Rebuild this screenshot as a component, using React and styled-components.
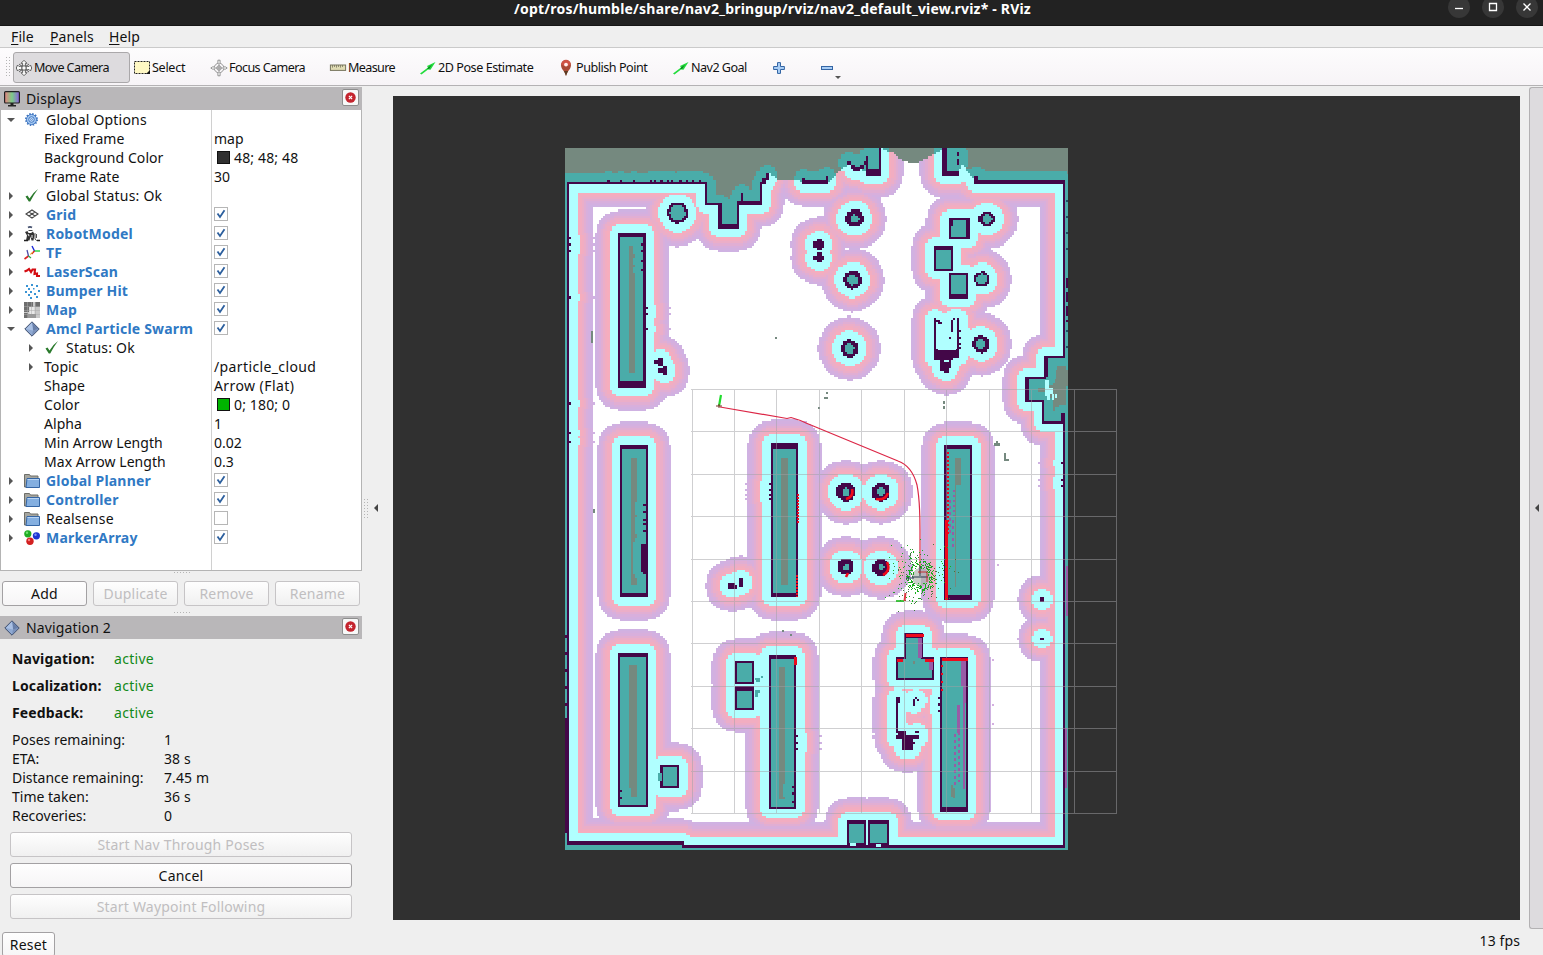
import React from 'react';
import styled, { createGlobalStyle } from 'styled-components';

const Global = createGlobalStyle`
  html, body { margin: 0; padding: 0; }
  body { width: 1543px; height: 955px; overflow: hidden; background: #efefef; }
  * { box-sizing: border-box; }
  body, button { font-family: "Noto Sans", "Open Sans", sans-serif; font-size: 14px; color: #111; }
`;

/* ---------- costmap ---------- */

const CELL = 2.12;
const COLS = 237;
const ROWS = 331;
const OX = 565;
const OY = 148;

const SHELVES = [
  [618, 233, 28, 155, 4, 6], [620, 445, 28, 153, 4, 4], [619, 653, 28, 155, 4, 3], [770, 443, 29, 155, 5, 5],
  [945, 445, 27, 155, 4, 4], [768, 655, 28, 155, 4, 3], [940, 657, 28, 155, 4, 4],
];
const BOXES = [
  [949, 218, 21, 22], [934, 246, 19, 25], [948, 273, 20, 25], [735, 661, 19, 23], [735, 687, 19, 23],
  [661, 765, 19, 24], [905, 634, 19, 26], [896, 656, 38, 24], [847, 821, 19, 25], [869, 821, 20, 25],
];
const DISCS = [
  [677.5, 213, 10.4, 7.6], [854.5, 218.5, 9, 4.2], [852.5, 280, 9, 5], [849.5, 348.5, 8.8, 5],
  [987, 219, 8, 5.2], [982, 279, 7.4, 5], [981, 344, 8.6, 4.8],
  [846, 492, 9.4, 4], [881, 492, 9.4, 4], [846, 567, 8, 3.2], [881, 567.5, 8.5, 3.2],
];
const SOLIDS = [
  [567, 182, 2, 662], [567, 182, 141, 2.5], [705, 182, 3, 24], [705, 203, 15, 3], [718, 203, 3, 25], [718, 225, 21, 3],
  [736, 203, 3, 25], [736, 202, 26, 3], [760, 182, 3, 23], [763, 177, 3, 6], [766, 173, 3, 7], [741, 193, 2, 10],
  [803, 180, 25, 3.5], [803, 177, 2, 4], [826, 176, 2, 5],
  [848, 161, 3, 5], [851, 164, 4, 5], [854, 167, 6, 5], [859, 164, 5, 6], [863, 160, 4, 5], [866, 157, 3, 17],
  [866, 170, 15, 5], [878, 149, 3, 25],
  [943, 149, 4, 25], [943, 171, 17, 4], [957, 152, 3, 4], [957, 159, 3, 6],
  [975, 180, 91, 3], [975, 176, 3, 5], [1064, 180, 1.5, 176], [1064, 420, 1.5, 428],
  [1045, 356, 20, 2.5], [1045, 356, 2.5, 20], [1026, 377, 21, 2.5], [1026, 377, 3, 25], [1026, 400, 18, 2.5],
  [1042, 400, 3, 24], [1042, 421, 19, 2.5], [1062, 413, 3, 11],
  [934, 318, 2.4, 36], [936, 319, 4, 3], [939, 322, 3, 3], [953, 317, 3, 3], [950, 320, 2.4, 12], [957, 318, 2.4, 34],
  [933, 350, 27, 7], [934, 356, 18, 4], [941, 358, 3, 12], [945, 363, 3, 9], [949, 358, 2.5, 11], [949, 337, 1.5, 1.5],
  [814, 242, 9, 6], [817, 240, 4, 10], [814, 256, 9, 4], [817, 252, 4, 11],
  [655, 360, 7, 4], [658, 358, 4, 8], [659, 368, 7, 4], [662, 366, 4, 9],
  [728, 583, 6, 6], [730, 585, 6, 5], [739, 579, 5, 7], [735, 585, 2, 2],
  [1040, 598, 4.3, 4], [1040, 637.5, 4.3, 2.3],
  [896, 697, 2.2, 36], [898, 697, 2, 6], [912, 700, 2, 5], [915, 697, 2, 3], [917, 699, 2, 3],
  [895, 735, 24, 4], [898, 731, 9, 4], [914, 731, 5, 3], [902, 739, 10, 11], [912, 741, 3, 3],
  [567, 842, 116, 2.5], [682, 845, 383, 2.5],
];
const TOP_UNKNOWN = [
  [565, 147], [1068, 147], [1068, 182], [976, 182], [974, 178], [966, 170], [962, 164], [959, 173], [945, 173], [944, 149],
  [930, 156], [922, 161], [912, 163], [900, 159], [893, 153], [882, 149], [879, 149], [879, 173], [868, 173], [850, 164],
  [841, 169], [836, 176], [828, 182], [803, 182], [797, 180], [778, 179], [768, 173], [765, 178], [761, 184], [761, 203],
  [738, 204], [737, 226], [719, 226], [719, 204], [706, 204], [706, 183], [565, 183],
];
const NICHE = [[1068, 356], [1046, 356], [1046, 378], [1028, 378], [1028, 400], [1043, 400], [1043, 422], [1068, 422]];

function inPoly(x, y, poly) {
  let inside = false;
  for (let i = 0, j = poly.length - 1; i < poly.length; j = i++) {
    const [xi, yi] = poly[i];
    const [xj, yj] = poly[j];
    if (yi > y !== yj > y && x < ((xj - xi) * (y - yi)) / (yj - yi) + xi) inside = !inside;
  }
  return inside;
}

const PALETTE = {
  wall: '#430748', cyan: '#b0ffff', teal: '#4aaca9', gray: '#75897f',
  p0: '#f6adbd', p1: '#f2adc1', p2: '#ebaec8', p3: '#e1aed3', p4: '#d8afdc', p5: '#d3b0e0', p6: '#cfb2e2',
};

function buildCostmap() {
  const n = COLS * ROWS;
  const wall = new Uint8Array(n);
  const unknown = new Uint8Array(n);
  const dist = new Float32Array(n).fill(99);
  const fillRect = (arr, x, y, w, h, v = 1) => {
    const c0 = Math.max(0, Math.round((x - OX) / CELL));
    const r0 = Math.max(0, Math.round((y - OY) / CELL));
    const c1 = Math.min(COLS, Math.max(c0 + 1, Math.round((x + w - OX) / CELL)));
    const r1 = Math.min(ROWS, Math.max(r0 + 1, Math.round((y + h - OY) / CELL)));
    for (let r = r0; r < r1; r++) for (let c = c0; c < c1; c++) arr[r * COLS + c] = v;
  };
  for (let r = 0; r < ROWS; r++) {
    for (let c = 0; c < COLS; c++) {
      const x = OX + (c + 0.5) * CELL;
      const y = OY + (r + 0.5) * CELL;
      const i = r * COLS + c;
      if (x < 567 || x > 1066 || y > 848 || (y > 843.5 && x < 683)) unknown[i] = 1;
      if (y < 230 && inPoly(x, y, TOP_UNKNOWN)) unknown[i] = 1;
      if (x > 1020 && inPoly(x, y, NICHE)) unknown[i] = 1;
      DISCS.forEach(([cx, cy, ro, ri]) => {
        const d = Math.hypot(x - cx, y - cy);
        if (d < ri) unknown[i] = 1;
        else if (d < ro) wall[i] = 1;
      });
    }
  }
  SHELVES.forEach(([x, y, w, h, t, b]) => {
    fillRect(wall, x, y, w, h);
    fillRect(wall, x + 2.1, y + t, w - 4.5, h - t - b, 0);
    fillRect(unknown, x + 2.1, y + t, w - 4.5, h - t - b);
  });
  BOXES.forEach(([x, y, w, h]) => {
    fillRect(wall, x, y, w, h);
    fillRect(wall, x + 2.2, y + 3, w - 4.4, h - 5, 0);
    fillRect(unknown, x + 2.2, y + 3, w - 4.4, h - 5);
  });
  fillRect(wall, 907, 650, 14, 9, 0);
  fillRect(unknown, 907, 650, 14, 9);
  SOLIDS.forEach((s) => fillRect(wall, ...s));
  const extra = [
    [608, 180], [621, 180], [633, 180], [649, 180], [654, 180], [660, 180], [666, 180], [672, 180], [679, 180], [686, 180], [693, 180], [698, 180],
    [569, 236], [569, 243], [569, 249], [569, 297], [569, 403], [569, 433], [569, 441],
    [646, 308], [646, 313], [646, 329], [643, 237], [641, 243], [641, 250], [641, 260], [641, 268],
    [643, 504], [643, 511], [643, 518], [643, 524], [643, 530], [643, 548], [643, 552], [643, 560], [643, 568], [643, 573],
    [768, 484], [768, 489], [768, 494], [768, 498], [618, 703], [618, 712], [618, 718], [618, 724], [620, 790], [620, 796],
    [796, 736], [796, 742], [796, 748], [792, 786], [792, 793], [792, 800], [939, 697], [939, 704], [939, 710],
    [960, 330], [960, 336], [960, 342], [960, 348], [1062, 462], [1062, 478], [1062, 486],
  ];
  extra.forEach(([x, y]) => fillRect(wall, x, y, 2, 2));
  /* thick right-hand edges on some scans */
  [[643, 237, 2, 28], [641, 545, 4, 26], [948, 220, 4, 6], [966, 220, 3, 16], [948, 294, 20, 3], [796, 450, 2, 140]].forEach((s) => fillRect(wall, ...s));
  const R = 11;
  for (let r = 0; r < ROWS; r++) {
    for (let c = 0; c < COLS; c++) {
      if (!wall[r * COLS + c]) continue;
      for (let dr = -R; dr <= R; dr++) {
        const rr = r + dr;
        if (rr < 0 || rr >= ROWS) continue;
        for (let dc = -R; dc <= R; dc++) {
          const cc = c + dc;
          if (cc < 0 || cc >= COLS) continue;
          const d = Math.hypot(dr, dc);
          const i = rr * COLS + cc;
          if (d < dist[i]) dist[i] = d;
        }
      }
    }
  }
  const paths = {};
  const kind = (i) => {
    if (wall[i]) return 'wall';
    const d = dist[i];
    if (unknown[i]) return d <= 4.3 ? 'teal' : 'gray';
    if (d <= 4.3) return 'cyan';
    if (d > 11) return null;
    return 'p' + Math.min(6, Math.floor(d - 4.3));
  };
  for (let r = 0; r < ROWS; r++) {
    let start = 0;
    let cur = kind(r * COLS);
    for (let c = 1; c <= COLS; c++) {
      const k = c < COLS ? kind(r * COLS + c) : undefined;
      if (k === cur) continue;
      if (cur) {
        const x0 = Math.round(OX + start * CELL);
        const x1 = Math.round(OX + c * CELL);
        const y0 = Math.round(OY + r * CELL);
        const y1 = Math.round(OY + (r + 1) * CELL);
        paths[cur] = (paths[cur] || '') + `M${x0} ${y0}H${x1}V${y1}H${x0}Z`;
      }
      start = c;
      cur = k;
    }
  }
  return paths;
}

const COSTMAP = buildCostmap();

function makeRandom(seed) {
  let s = seed;
  return () => {
    s = (s * 16807) % 2147483647;
    return s / 2147483647;
  };
}

function buildParticles() {
  const rnd = makeRandom(4217);
  const out = ['', ''];
  for (let i = 0; i < 400; i++) {
    const ring = i < 210;
    const a = rnd() * Math.PI * 2;
    const rad = ring ? 11.5 + (rnd() + rnd() - 1) * 5 : 6 + Math.sqrt(-2 * Math.log(rnd() + 0.001)) * 12;
    const x = Math.round(920 + Math.cos(a) * rad);
    const y = Math.round(576 + Math.sin(a) * rad * 1.05);
    if (y > 520 && y < 612) out[ring ? 0 : i % 2] += `M${x} ${y}h1v1h-1z`;
  }
  return out;
}
const PARTICLES = buildParticles();

const GRID_X = Array.from({ length: 11 }, (_, i) => Math.round(691.5 + i * 42.45) + 0.5);
const GRID_Y = Array.from({ length: 11 }, (_, i) => Math.round(389 + i * 42.4) + 0.5);

const Canvas = styled.svg`
  display: block;
  width: 1127px;
  height: 824px;
  background: #303030;
`;

function MapView() {
  return (
    <Canvas viewBox="393 96 1127 824">
      <g shapeRendering="crispEdges">
        <rect x="566" y="149" width="500" height="700" fill="#fff" />
        {Object.entries(COSTMAP).map(([k, d]) => <path key={k} d={d} fill={PALETTE[k]} />)}
        <path d="M1066 174h2v676h-2z" fill="#4aaca9" />
        <path d="M1067 148h1v26h-1z" fill="#75897f" />
        <path d="M938 325h11v25h-11zM949 340h7v10h-7z" fill="#b0ffff" />
        {/* scanned shelves without a hollow core */}
        <path d="M956 485h7v107h-7zM949 668h8v136h-8zM904 664h22v8h-22z" fill="#4aaca9" />
        <path d="M961 661h5v42h-3v-17h-2zM963 703h2v86h-2zM957 705h3v28h-3zM918 638h4v20h-4zM929 660h4v10h-4z" fill="#985ca6" />
        <path d="M959 732v50M955 734v52M950 500v35M953 520v30" stroke="#985ca6" strokeWidth="2" strokeDasharray="3 3" />
        <path d="M954 490v26" stroke="#985ca6" strokeWidth="2" strokeDasharray="2 3" />
        <path d="M952 785v12M954 788v10" stroke="#75897f" strokeWidth="2" />
        <path d="M1067 566v50M1066 728v60" stroke="#985ca6" strokeWidth="2" />
        <path d="M1067 200v60M1067 330v26" stroke="#204e66" strokeWidth="2" strokeDasharray="2 14" />
        <path d="M1067 278v44" stroke="#430748" strokeWidth="2" strokeDasharray="10 4" />
        <path d="M566 718v115" stroke="#430748" strokeWidth="2" />
        <path d="M566 635v80" stroke="#430748" strokeWidth="2" strokeDasharray="3 14" />
        <path d="M755 678h6v-2h2v2h-3v4h-4zM755 690h5v3h-2v4h-3zM658 773h4v8h-4z" fill="#4aaca9" />
        <path d="M1045 380h4v8h4v6h-4v2h-4zM1047 394h3v6h-3zM1052 394h2v6h-2zM1055 394h2v4h-2zM850 843h6v3h-6zM876 844h5v3h-5z" fill="#b0ffff" />
        <path d="M1056 370h12v16h-9v-5h-3z" fill="#75897f" />
        <path d="M591 331h2v12h-2zM775 337h2v2h-2zM826 392h2v2h-2zM824 397h4v2h-4zM818 407h2v2h-2zM943 401h2v3h-2zM943 406h2v3h-2zM593 509h2v4h-2zM994 443h6v3h-6zM996 441h2v2h-2zM1004 453h2v6h3v2h-5zM782 630h2v2h-2zM790 634h2v2h-2z" fill="#75897f" />
        {/* doubtful cells at the inflation edge */}
        <path d="M992 659h2v2h-2zM992 704h2v2h-2zM992 723h2v2h-2zM997 564h2v2h-2z" fill="#d3b0e0" />
      </g>
      <path
        d={GRID_X.map((x) => `M${x} 389V814`).join('') + GRID_Y.map((y) => `M691 ${y}H1116`).join('')}
        stroke="#a0a0a4" strokeOpacity="0.5" strokeWidth="1" fill="none" shapeRendering="crispEdges"
      />
      {/* laser returns */}
      <g fill="none" stroke="#ee0a1c" strokeWidth="2" shapeRendering="crispEdges">
        <path d="M798 494v29M797 575v22" strokeDasharray="2 1" />
        <path d="M946.500 520v80" strokeWidth="3" />
        <path d="M948 452v84" strokeDasharray="2 2" />
        <path d="M906 635.500h18M897 660h6M925 660h9M942 659h26" strokeWidth="3" />
        <path d="M942 665v30" strokeDasharray="2 6" />
        <path d="M795 657v8" strokeWidth="3" />
      </g>
      <g fill="none" stroke="#f00a1a" strokeWidth="2.600">
        <path d="M852 489q2 8-6 10M888 493q-3 8-12 6M887 562q4 9-4 13M848 573l-2 4" />
      </g>
      {/* planned path */}
      <path d="M720 407L787 418.500L791 417.500Q800 420 806 423L898 461Q912 466 917 485Q920 500 920 530V574" fill="none" stroke="#dc2646" strokeWidth="1.200" />
      <path d="M719 406l2-11" stroke="#1fdc2c" strokeWidth="2.200" />
      <path d="M716 406h6M719 404v4" stroke="#7a3328" strokeWidth="1" />
      <g shapeRendering="crispEdges">
        <circle cx="921" cy="577" r="9" fill="#a3ada0" fillOpacity="0.6" />
        <path d={PARTICLES[0]} fill="#18b01c" />
        <path d={PARTICLES[1]} fill="#3f7a3c" />
      </g>
      <path d="M920 566v10M912 577h16M906 578h8" stroke="#263b50" strokeWidth="1" />
      <path d="M918 572h9v10" stroke="#c03030" strokeWidth="1" fill="none" />
      <path d="M896 601h8" stroke="#18b818" strokeWidth="1.600" />
      <path d="M905.500 593l-1 8" stroke="#e03a42" strokeWidth="2" />
    </Canvas>
  );
}

/* ---------- icons ---------- */

const Svg = styled.svg`
  display: block;
  flex: none;
  width: ${(p) => p.$s || 16}px;
  height: ${(p) => p.$s || 16}px;
  overflow: visible;
`;

const TfArrow = () => (
  <Svg viewBox="0 0 16 16">
    <path d="M0 13.500L1.500 14.500L8 9.500L10.500 9.800L15.500 2L7 6L8 7.500Z" fill="#22dc3c" />
    <path d="M7 8.500l5-4-3 4.500z" fill="#0b7d20" />
  </Svg>
);

const DiamondIcon = () => (
  <Svg viewBox="0 0 16 16">
    <path d="M8 .8L15.200 8L8 15.200L.8 8Z" fill="#8fa9d2" stroke="#3c4c6b" strokeWidth="1" />
    <path d="M8 1.500L14.500 8L9 9.500Z" fill="#687fa9" />
    <path d="M8 1.500L9 9.500L2 8Z" fill="#a9c0e4" />
    <path d="M9 9.500L8 14.500L14.500 8Z" fill="#7990ba" />
  </Svg>
);

const ICONS = {
  move: (
    <Svg viewBox="0 0 16 16">
      <g fill="#fafafa" stroke="#555" strokeWidth="0.900">
        <path d="M8 .3l3 3H9.400v3H6.600v-3H5zM8 15.700l-3-3h1.600v-3h2.800v3H11z" />
        <path d="M.3 8l1.200-3 1.500 1.500 3-.5v4l-3-.5-1.500 1.500zM15.700 8l-1.200-3L13 6.500l-3-.5v4l3-.5 1.500 1.500z" />
        <path d="M3 4l10 8M13 4L3 12" />
        <circle cx="8" cy="8" r="2.200" />
      </g>
    </Svg>
  ),
  select: (
    <Svg viewBox="0 0 16 16">
      <rect x=".5" y="1.500" width="15" height="12" fill="#fff8c4" stroke="#222" strokeWidth="1" strokeDasharray="2 1" />
      <path d="M12 14l4-4v4z" fill="#111" />
    </Svg>
  ),
  focus: (
    <Svg viewBox="0 0 16 16">
      <g fill="none" stroke="#8a8a8a" strokeWidth=".9">
        <circle cx="8" cy="8" r="4.800" />
        <circle cx="8" cy="8" r="2.200" />
        <path d="M8 3.500v9M3.500 8h9" />
        <path d="M6.900 3.300V.2h2.200v3.100M6.900 12.700v3.100h2.200v-3.100M3.300 6.900H1.500L-.2 8l1.700 1.100h1.800M12.700 6.900h1.800L16.200 8l-1.700 1.100h-1.800" fill="#fafafa" />
      </g>
    </Svg>
  ),
  measure: (
    <Svg viewBox="0 0 16 16">
      <rect x=".4" y="5" width="15.200" height="5.400" fill="#e0dcb4" stroke="#77755e" strokeWidth="1" />
      <path d="M2.500 5v2.600M4.500 5v2M6.500 5v2.600M8.500 5v2M10.500 5v2.600M12.500 5v2" stroke="#77755e" strokeWidth=".8" />
    </Svg>
  ),
  arrow: <TfArrow />,
  pin: (
    <Svg viewBox="0 0 16 16">
      <path d="M8 16C7 11 3 9.500 3 5A5 5 0 0 1 13 5C13 9.500 9 11 8 16Z" fill="#a94a35" />
      <path d="M3.300 4.500A4.700 4.700 0 0 1 12.700 4.500Q8 8 3.300 4.500Z" fill="#cf5344" />
      <path d="M6 11h4l-2 5z" fill="#5b3a22" />
      <circle cx="8" cy="4.600" r="1.900" fill="#fff0ec" />
    </Svg>
  ),
  plus: (
    <Svg $s={12} viewBox="0 0 12 12">
      <path d="M4.500 .6h3v3.900h3.900v3H7.500v3.900h-3V7.500H.6v-3h3.900z" fill="#a8cdf5" stroke="#3465a4" />
    </Svg>
  ),
  minus: (
    <Svg $s={12} viewBox="0 0 12 12">
      <rect x=".5" y="4.500" width="11" height="3" fill="#a8cdf5" stroke="#3465a4" />
    </Svg>
  ),
  gear: (
    <Svg viewBox="0 0 16 16">
      <circle cx="7.500" cy="7.500" r="5" fill="#a9cdf6" stroke="#4076c0" strokeWidth="1" />
      <circle cx="7.500" cy="7.500" r="5.700" fill="none" stroke="#4076c0" strokeWidth="1.600" strokeDasharray="1.492 1.492" />
      <circle cx="7.500" cy="7.500" r="2.800" fill="#c4ddfa" stroke="#4076c0" />
      <circle cx="7.500" cy="7.500" r=".9" fill="#fff" stroke="#4076c0" strokeWidth=".8" />
    </Svg>
  ),
  check: (
    <Svg viewBox="0 0 16 16">
      <path d="M1.500 8.500L3.500 7.500L5.500 10.500Q9 4.500 14 1Q9.500 7 6.200 13.500H4.800Z" fill="#2a7a2c" />
    </Svg>
  ),
  grid: (
    <Svg viewBox="0 0 16 16">
      <path d="M8 3L14 7L8 11L2 7ZM5 5L11 9M11 5L5 9" fill="none" stroke="#444" strokeWidth="1.100" />
    </Svg>
  ),
  robot: (
    <Svg viewBox="0 0 16 16">
      <path d="M4 1.500Q6 .3 8 1.500" stroke="#44506e" strokeWidth="1.600" fill="none" />
      <path d="M4.500 4.500h4" stroke="#444" />
      <path d="M1 6l2.500-1 1 2h2.500l2-1.500 1.500 3-1 6H7.500l-1-4-1 4H2l1-5z" fill="#333" />
      <path d="M11 7v6q1 2 3 1.500M12.500 8v4M5 8v3" stroke="#555" fill="none" />
      <path d="M0 14.500h4M13 14.500h3" stroke="#222" strokeWidth="1.500" />
      <path d="M4 8l1 2M8 9v3" stroke="#eee" />
    </Svg>
  ),
  tf: (
    <Svg viewBox="0 0 16 16">
      <path d="M8 1l2.500 5" stroke="#1c28d8" strokeWidth="1.400" />
      <path d="M10.500 6H16" stroke="#1fd03a" strokeWidth="1.400" />
      <path d="M10.500 6L7.500 9M4.500 11L.5 14" stroke="#d22" strokeWidth="1.600" />
      <path d="M3 5l1.500 6" stroke="#4c4ca8" strokeWidth="1.300" />
      <path d="M4.500 11L7 13" stroke="#2a4" strokeWidth="1.200" />
      <path d="M6 9.500L9 7" stroke="#e0b020" />
    </Svg>
  ),
  laser: (
    <Svg viewBox="0 0 16 16">
      <path d="M.5 7.500L3 6.500l2-1.500 2 3 1.500-2.500h2.500L10.500 10l2.500-.5 0 2.500L16 12" fill="none" stroke="#d40b10" strokeWidth="2.100" />
    </Svg>
  ),
  bumper: (
    <Svg viewBox="0 0 16 16">
      <path d="M2 2h2v2H2zM7 1h2v2H7zM12 2h2v2h-2zM4 5h2v2H4zM9 5h1.500v1.500H9zM1 8h2v2H1zM6 8h2v2H6zM14 7h2v2h-2zM4 11h2v2H4zM10 10h2v2h-2zM12 13h2v2h-2zM6 14h2v2H6z" fill="#3a94d4" />
    </Svg>
  ),
  map: (
    <Svg viewBox="0 0 16 16">
      <rect width="16" height="16" fill="#c9c9c9" />
      <path d="M0 0h9v5H5v5H0zM0 11h4v5H0zM11 0h5v5h-5z" fill="#6e6e6e" />
      <path d="M5.500 5h5v11h-5z" fill="#e9e9e9" />
      <path d="M3.500 0v16M7.500 0v16M11.500 0v16M0 4.500h16M0 8.500h16M0 12.500h16" stroke="#aaa" strokeWidth=".5" />
      <path d="M4 12h8v4H4z" fill="#999" />
    </Svg>
  ),
  diamond: <DiamondIcon />,
  folder: (
    <Svg viewBox="0 0 16 16">
      <path d="M.5 14V1.500h5l1 1.500h7.500V14Z" fill="#a6a69f" stroke="#6e6e68" />
      <path d="M3 5.500H15.500V14.500H2Z" fill="#84afe0" stroke="#3465a4" />
      <path d="M3.500 6.500h11.500" stroke="#b8d3f2" />
    </Svg>
  ),
  markers: (
    <Svg viewBox="0 0 16 16">
      <circle cx="3.800" cy="3.800" r="3.600" fill="#1fae24" />
      <circle cx="12.400" cy="5.800" r="3.600" fill="#1c35d2" />
      <circle cx="6" cy="11.300" r="3.700" fill="#d32020" />
      <circle cx="3" cy="2.800" r="1.200" fill="#6fe070" />
      <circle cx="11.500" cy="4.800" r="1.200" fill="#7c90f5" />
      <circle cx="5" cy="10" r="1.200" fill="#f58080" />
    </Svg>
  ),
  monitor: (
    <Svg viewBox="0 0 16 16">
      <defs>
        <linearGradient id="screen">
          <stop offset="0" stopColor="#e88080" />
          <stop offset=".5" stopColor="#7ccc88" />
          <stop offset="1" stopColor="#8a5fe0" />
        </linearGradient>
      </defs>
      <rect x=".6" y=".6" width="14.800" height="11.400" rx="1" fill="url(#screen)" stroke="#222" strokeWidth="1.200" />
      <path d="M6.500 12h3v2h2.500v1.500H4V14h2.500z" fill="#222" />
    </Svg>
  ),
};

/* ---------- window chrome ---------- */

const Window = styled.div`
  width: 1543px;
  height: 955px;
  display: flex;
  flex-direction: column;
  overflow: hidden;
  background: #efefef;
`;

const TitleBar = styled.header`
  flex: none;
  height: 26px;
  background: #222;
  border-bottom: 1px solid #161616;
  display: grid;
  grid-template-columns: 1fr 540px 1fr;
  color: #fff;
`;

const Title = styled.div`
  grid-column: 2;
  padding-left: 2px;
  text-align: center;
  font-weight: 700;
  font-size: 14px;
  line-height: 17px;
  white-space: nowrap;
  letter-spacing: 0.2px;
`;

const WindowButtons = styled.div`
  display: flex;
  justify-content: flex-end;
  gap: 12px;
  padding-right: 5px;
`;

const WindowButton = styled.div`
  width: 22px;
  height: 22px;
  margin-top: -4px;
  border-radius: 50%;
  background: #373737;
  display: grid;
  place-items: center;
`;

const MenuBar = styled.nav`
  flex: none;
  height: 22px;
  border-bottom: 1px solid #cacaca;
  padding: 0 11px;
  display: flex;
  gap: 15px;
  line-height: 21px;
`;

const MenuItem = styled.span`
  &::first-letter { text-decoration: underline; text-decoration-thickness: 1px; text-underline-offset: 2px; }
  display: inline-block;
  width: ${(p) => p.$w}px;
  white-space: nowrap;
  letter-spacing: 0.1px;
`;

const ToolBar = styled.div`
  flex: none;
  height: 38px;
  display: flex;
  align-items: flex-end;
  padding: 0 0 2px 5px;
  background: linear-gradient(#fdfcfd, #f7f4f7);
  border-bottom: 1px solid #b4b2b4;
`;

const Grip = styled.div`
  flex: none;
  width: ${(p) => p.$w}px;
  height: ${(p) => p.$h}px;
  margin: ${(p) => p.$m || 0};
  background-image: radial-gradient(circle, #b5b5b5 0.7px, transparent 0.9px);
  background-size: 3px 3px;
`;

const Tool = styled.div`
  position: relative;
  flex: none;
  display: flex;
  align-items: center;
  gap: 2px;
  width: ${(p) => p.$w}px;
  height: 31px;
  padding-left: ${(p) => (p.$on ? 2 : 4)}px;
  border: 1px solid ${(p) => (p.$on ? '#aaa8aa' : 'transparent')};
  border-width: ${(p) => (p.$on ? 1 : 0)}px;
  border-radius: 3px;
  background: ${(p) => (p.$on ? '#dddbde' : 'none')};
  font-size: 12.6px;
  letter-spacing: ${(p) => p.$ls || 0}px;
  white-space: nowrap;
`;

const Caret = styled.i`
  position: absolute;
  left: 18px;
  top: 24px;
  border: 3px solid transparent;
  border-top-color: #555;
  border-bottom: 0;
`;

const Body = styled.div`
  flex: 1;
  display: flex;
  min-height: 0;
`;

const Side = styled.aside`
  width: 362px;
  flex: none;
  display: flex;
  flex-direction: column;
  padding-top: 1px;
`;

const PanelHead = styled.div`
  flex: none;
  display: flex;
  align-items: center;
  height: 23px;
  padding: 0 3px 0 4px;
  gap: 6px;
  background: #b9b7b9;
`;

const PanelTitle = styled.span`
  flex: 1;
  line-height: 22px;
  letter-spacing: 0.15px;
`;

const CloseButton = styled.div`
  width: 17px;
  height: 17px;
  margin-top: -3px;
  border: 1px solid #8d8d8d;
  border-radius: 2px;
  background: #f8f8f8;
  display: grid;
  place-items: center;
`;

const Tree = styled.div`
  flex: none;
  height: 461px;
  border: 1px solid #b4b4b4;
  border-top: 0;
  background: linear-gradient(to right, #fff 210px, #d0d0d0 210px, #d0d0d0 211px, #fff 211px);
`;

const Row = styled.div`
  display: flex;
  align-items: center;
  height: 19px;
  line-height: 19px;
`;

const NameCell = styled.div`
  width: 211px;
  flex: none;
  display: flex;
  align-items: center;
  padding-left: ${(p) => 4 + p.$level * 20}px;
  white-space: nowrap;
`;

const Expander = styled.i`
  flex: none;
  width: 12px;
  height: 8px;
  margin-right: 7px;
  display: grid;
  place-items: center;
  &::before {
    content: "";
    display: ${(p) => (p.$state ? 'block' : 'none')};
    border: 4px solid transparent;
    ${(p) => (p.$state === 'open'
      ? 'border-top-color: #555; border-bottom: 0;'
      : 'border-left-color: #555; border-right: 0;')}
  }
`;

const Name = styled.span`
  padding-left: ${(p) => (p.$icon ? 6 : 0)}px;
  font-weight: ${(p) => (p.$on ? 700 : 400)};
  color: ${(p) => (p.$on ? '#3079c4' : '#111')};
  letter-spacing: ${(p) => (p.$icon ? 0.2 : 0.06)}px;
`;

const ValueCell = styled.div`
  display: flex;
  align-items: center;
  padding-left: 2px;
  letter-spacing: ${(p) => p.$ls}px;
`;

const Swatch = styled.i`
  width: 13px;
  height: 13px;
  margin: 0 4px 0 3px;
  border: 1px solid #111;
  background: ${(p) => p.$c};
`;

const Box = styled.i`
  width: 14px;
  height: 14px;
  margin-top: -1px;
  border: 1px solid #b6b6b6;
  background: #fff;
  display: grid;
  place-items: center;
`;

const ButtonRow = styled.div`
  display: flex;
  gap: 6px;
  padding: 0 2px;
`;

const Button = styled.button`
  flex: ${(p) => (p.$w ? 'none' : 1)};
  width: ${(p) => (p.$w ? p.$w + 'px' : 'auto')};
  height: 25px;
  padding: 0;
  line-height: 20px;
  letter-spacing: 0.2px;
  border: 1px solid ${(p) => (p.disabled ? '#c6c4c6' : '#a3a1a3')};
  border-radius: 3px;
  background: linear-gradient(#fefefe, ${(p) => (p.disabled ? '#f0f0f0' : '#f6f5f6')});
  color: ${(p) => (p.disabled ? '#c0bec0' : '#111')};
`;

const StatusList = styled.dl`
  margin: 6px 0 0;
  padding-left: 12px;
  display: grid;
  grid-template-columns: 102px 1fr;
  grid-auto-rows: 27px;
  line-height: 27px;
  letter-spacing: 0.12px;
  dt { font-weight: 700; white-space: nowrap; }
  dd { margin: 0; color: #138a18; letter-spacing: 0.3px; }
`;

const StatList = styled(StatusList)`
  margin-top: 4px;
  grid-template-columns: 152px 1fr;
  grid-auto-rows: 19px;
  line-height: 19px;
  letter-spacing: 0;
  dt { font-weight: 400; }
  dd { color: #111; letter-spacing: 0.1px; }
`;

const NavButtons = styled.div`
  display: flex;
  flex-direction: column;
  gap: 6px;
  padding: 7px 10px 0;
  button { flex: none; }
`;

const ResetSlot = styled.div`
  padding: 13px 0 0 2px;
`;

const Splitter = styled.div`
  width: 31px;
  flex: none;
  display: flex;
  align-items: center;
  padding: 0 0 25px 1px;
`;

const LeftArrow = styled.i`
  margin-left: ${(p) => p.$ml || 0}px;
  border: 4px solid transparent;
  border-right-color: #444;
  border-left: 0;
`;

const Center = styled.main`
  width: 1127px;
  flex: none;
  padding-top: 10px;
`;

const Fps = styled.div`
  height: 35px;
  padding-top: 6px;
  line-height: 30px;
  text-align: right;
  letter-spacing: 0.1px;
`;

const Dock = styled.div`
  width: 14px;
  height: 842px;
  margin: 1px 0 0 9px;
  border: 1px solid #b3b1b3;
  border-right: 0;
  border-radius: 3px 0 0 3px;
  background: #dddbde;
  display: flex;
  align-items: center;
`;

const ROWS_DATA = [
  { l: 0, s: 'open', i: 'gear', n: 'Global Options' },
  { l: 1, n: 'Fixed Frame', v: 'map' },
  { l: 1, n: 'Background Color', v: '48; 48; 48', c: '#303030', ls: 0.15 },
  { l: 1, n: 'Frame Rate', v: '30' },
  { l: 0, s: 'shut', i: 'check', n: 'Global Status: Ok' },
  { l: 0, s: 'shut', i: 'grid', n: 'Grid', box: true, on: true },
  { l: 0, s: 'shut', i: 'robot', n: 'RobotModel', box: true, on: true },
  { l: 0, s: 'shut', i: 'tf', n: 'TF', box: true, on: true },
  { l: 0, s: 'shut', i: 'laser', n: 'LaserScan', box: true, on: true },
  { l: 0, s: 'shut', i: 'bumper', n: 'Bumper Hit', box: true, on: true },
  { l: 0, s: 'shut', i: 'map', n: 'Map', box: true, on: true },
  { l: 0, s: 'open', i: 'diamond', n: 'Amcl Particle Swarm', box: true, on: true },
  { l: 1, s: 'shut', i: 'check', n: 'Status: Ok' },
  { l: 1, s: 'shut', n: 'Topic', v: '/particle_cloud', ls: 0.38 },
  { l: 1, n: 'Shape', v: 'Arrow (Flat)', ls: 0.42 },
  { l: 1, n: 'Color', v: '0; 180; 0', c: '#00b400', ls: 0.15 },
  { l: 1, n: 'Alpha', v: '1' },
  { l: 1, n: 'Min Arrow Length', v: '0.02' },
  { l: 1, n: 'Max Arrow Length', v: '0.3' },
  { l: 0, s: 'shut', i: 'folder', n: 'Global Planner', box: true, on: true },
  { l: 0, s: 'shut', i: 'folder', n: 'Controller', box: true, on: true },
  { l: 0, s: 'shut', i: 'folder', n: 'Realsense', box: true },
  { l: 0, s: 'shut', i: 'markers', n: 'MarkerArray', box: true, on: true },
];

const TOOLS = [
  { i: 'move', t: 'Move Camera', w: 117, on: true, ls: -0.6 },
  { i: 'select', t: 'Select', w: 77, ls: -0.3 },
  { i: 'focus', t: 'Focus Camera', w: 119, ls: -0.6 },
  { i: 'measure', t: 'Measure', w: 90, ls: -0.65 },
  { i: 'arrow', t: '2D Pose Estimate', w: 138, ls: -0.46 },
  { i: 'pin', t: 'Publish Point', w: 115, ls: -0.47 },
  { i: 'arrow', t: 'Nav2 Goal', w: 100, ls: -0.55 },
  { i: 'plus', w: 48 },
  { i: 'minus', w: 30, caret: true },
];

function Close() {
  return (
    <CloseButton>
      <Svg $s={11} viewBox="0 0 11 11">
        <circle cx="5.500" cy="5.500" r="5.200" fill="#c4242e" />
        <path d="M3.900 3.900l3.200 3.200M7.100 3.900L3.900 7.100" stroke="#fff" strokeWidth="1.200" />
      </Svg>
    </CloseButton>
  );
}

function TreeRow({ row }) {
  return (
    <Row>
      <NameCell $level={row.l}>
        <Expander $state={row.s} />
        {row.i && ICONS[row.i]}
        <Name $icon={!!row.i} $on={row.on}>{row.n}</Name>
      </NameCell>
      <ValueCell $ls={row.ls || 0}>
        {row.box && (
          <Box>
            {row.on && (
              <Svg $s={10} viewBox="0 0 10 10">
                <path d="M1.500 4.500L4 8L8.500 1.200" fill="none" stroke="#2c5f9e" strokeWidth="1.800" />
              </Svg>
            )}
          </Box>
        )}
        {row.c && <Swatch $c={row.c} />}
        {row.v}
      </ValueCell>
    </Row>
  );
}

export default function App() {
  return (
    <Window>
      <Global />
      <TitleBar>
        <Title>/opt/ros/humble/share/nav2_bringup/rviz/nav2_default_view.rviz* - RViz</Title>
        <WindowButtons>
          {['M7 12.500h8', 'M7.500 7.500h7v7h-7z', 'M7.500 7.500l7 7M14.500 7.500l-7 7'].map((d) => (
            <WindowButton key={d}>
              <Svg $s={22} viewBox="0 0 22 22"><path d={d} fill="none" stroke="#fff" strokeWidth="1.300" /></Svg>
            </WindowButton>
          ))}
        </WindowButtons>
      </TitleBar>
      <MenuBar>
        <MenuItem $w={24}>File</MenuItem>
        <MenuItem $w={44}>Panels</MenuItem>
        <MenuItem $w={32}>Help</MenuItem>
      </MenuBar>
      <ToolBar>
        <Grip $w={6} $h={21} $m="0 2px 6px 0" />
        {TOOLS.map((t, k) => (
          <Tool key={k} $w={t.w} $on={t.on} $ls={t.ls}>
            {ICONS[t.i]}
            {t.t}
            {t.caret && <Caret />}
          </Tool>
        ))}
      </ToolBar>
      <Body>
        <Side>
          <PanelHead>{ICONS.monitor}<PanelTitle>Displays</PanelTitle><Close /></PanelHead>
          <Tree>{ROWS_DATA.map((r) => <TreeRow key={r.n} row={r} />)}</Tree>
          <Grip $w={18} $h={3} $m="0 0 7px 173px" />
          <ButtonRow>
            <Button>Add</Button>
            <Button disabled>Duplicate</Button>
            <Button disabled>Remove</Button>
            <Button disabled>Rename</Button>
          </ButtonRow>
          <Grip $w={18} $h={3} $m="5px 0 2px 173px" />
          <PanelHead><DiamondIcon /><PanelTitle>Navigation 2</PanelTitle><Close /></PanelHead>
          <StatusList>
            <dt>Navigation:</dt><dd>active</dd>
            <dt>Localization:</dt><dd>active</dd>
            <dt>Feedback:</dt><dd>active</dd>
          </StatusList>
          <StatList>
            <dt>Poses remaining:</dt><dd>1</dd>
            <dt>ETA:</dt><dd>38 s</dd>
            <dt>Distance remaining:</dt><dd>7.45 m</dd>
            <dt>Time taken:</dt><dd>36 s</dd>
            <dt>Recoveries:</dt><dd>0</dd>
          </StatList>
          <NavButtons>
            <Button disabled>Start Nav Through Poses</Button>
            <Button>Cancel</Button>
            <Button disabled>Start Waypoint Following</Button>
          </NavButtons>
          <ResetSlot><Button $w={53}>Reset</Button></ResetSlot>
        </Side>
        <Splitter>
          <Grip $w={5} $h={21} />
          <LeftArrow $ml={6} />
        </Splitter>
        <Center>
          <MapView />
          <Fps>13 fps</Fps>
        </Center>
        <Dock><LeftArrow $ml={5} /></Dock>
      </Body>
    </Window>
  );
}
